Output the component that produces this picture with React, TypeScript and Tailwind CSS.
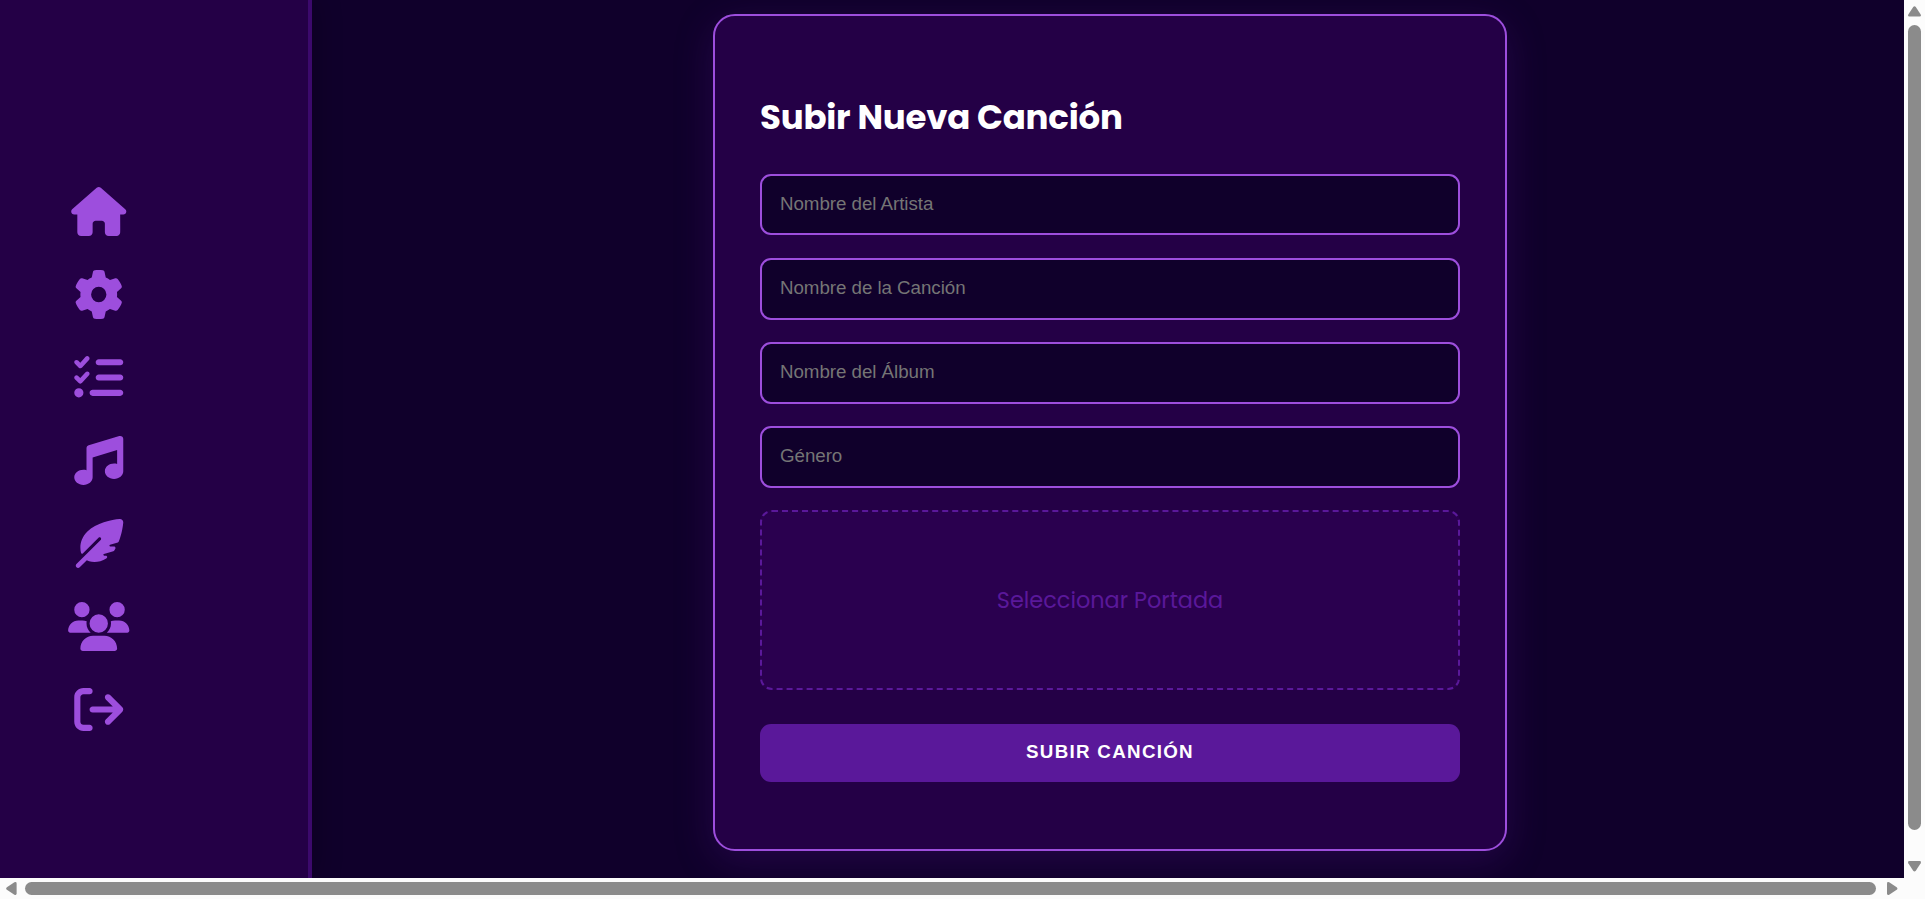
import type { IconType } from "react-icons";
import {
  FaArrowRightFromBracket,
  FaFeatherPointed,
  FaGear,
  FaHouse,
  FaListCheck,
  FaMusic,
  FaUsers,
} from "react-icons/fa6";

const navItems: { label: string; Icon: IconType }[] = [
  { label: "Inicio", Icon: FaHouse },
  { label: "Ajustes", Icon: FaGear },
  { label: "Listas", Icon: FaListCheck },
  { label: "Música", Icon: FaMusic },
  { label: "Letras", Icon: FaFeatherPointed },
  { label: "Usuarios", Icon: FaUsers },
  { label: "Salir", Icon: FaArrowRightFromBracket },
];

const fields = ["Nombre del Artista", "Nombre de la Canción", "Nombre del Álbum", "Género"];

function Sidebar() {
  return (
    <nav className="z-10 flex w-[312px] shrink-0 flex-col gap-[34px] border-r-4 border-[#3c096c] bg-[#240046] pt-[187px] pl-[68px] shadow-[5px_0_25px_rgba(0,0,0,0.2)]">
      {navItems.map(({ label, Icon }) => (
        <a key={label} aria-label={label} className="block h-[49px] w-[61.5px] text-[#9d4edd]">
          <Icon className="h-[49px] w-[61.5px]" />
        </a>
      ))}
    </nav>
  );
}

function UploadForm() {
  return (
    <form className="mt-[14px] flex h-[837px] w-[794px] flex-col rounded-[22px] border-2 border-[#9d4edd] bg-[#240046] px-[45px] pt-[75px] shadow-[0_10px_38px_rgba(90,24,154,0.25)]">
      <h2 className="mb-[30.65px] h-[52px] font-[Poppins,Inter,sans-serif] text-[34px] leading-[52px] font-bold tracking-[-0.22px] whitespace-nowrap text-white">
        Subir Nueva Canción
      </h2>
      <div className="flex flex-col gap-[22.3px]">
        {fields.map((name) => (
          <input
            key={name}
            type="text"
            placeholder={name}
            className="block h-[61.8px] w-full rounded-[11px] border-2 border-[#9d4edd] bg-[#10002b] px-[18px] pb-[1.5px] font-['Liberation_Sans',Arial,sans-serif] text-[18.75px] tracking-[-0.05px] text-white placeholder:text-[#757575]"
          />
        ))}
        <div className="flex h-[180px] items-center justify-center rounded-[12px] border-2 border-dashed border-[#5a189a] bg-[#2a004f] pt-[2px] font-[Poppins,Inter,sans-serif] text-[22.4px] text-[#5a189a]">
          Seleccionar Portada
        </div>
      </div>
      <button
        type="button"
        className="mt-[34px] h-[58px] shrink-0 rounded-[11px] bg-[#5a189a] pb-[2px] font-['Liberation_Sans',Arial,sans-serif] text-[18.75px] font-bold tracking-[1.3px] text-white"
      >
        SUBIR CANCIÓN
      </button>
    </form>
  );
}

function VerticalScrollbar() {
  return (
    <div className="flex h-full w-[21px] flex-col items-center bg-[#fcfcfc] pt-[6px]">
      <svg className="h-[11px] w-[13px]" viewBox="0 0 13 11" fill="#8b8b8b">
        <path d="M5.2 .9Q6.5-.6 7.8.9L12.7 8.4Q13.6 10.6 11.6 10.6H1.4Q-.6 10.6.3 8.4Z" />
      </svg>
      <div className="mt-[8px] h-[805px] w-[13px] rounded-full bg-[#8b8b8b]" />
      <svg className="mt-[31px] h-[11px] w-[13px]" viewBox="0 0 13 11" fill="#8b8b8b">
        <path d="M5.2 9.7Q6.5 11.2 7.8 9.7L12.7 2.2Q13.6 0 11.6 0H1.4Q-.6 0 .3 2.2Z" />
      </svg>
    </div>
  );
}

function HorizontalScrollbar() {
  return (
    <div className="flex h-[21px] w-full items-center bg-[#fcfcfc] pl-[6px]">
      <svg className="h-[13px] w-[11px]" viewBox="0 0 11 13" fill="#8b8b8b">
        <path d="M.9 5.2Q-.6 6.5.9 7.8L8.4 12.7Q10.6 13.6 10.6 11.6V1.4Q10.6-.6 8.4.3Z" />
      </svg>
      <div className="ml-[8px] h-[13px] w-[1851px] rounded-full bg-[#8b8b8b]" />
      <svg className="ml-[11px] h-[13px] w-[11px]" viewBox="0 0 11 13" fill="#8b8b8b">
        <path d="M9.7 5.2Q11.2 6.5 9.7 7.8L2.2 12.7Q0 13.6 0 11.6V1.4Q0-.6 2.2.3Z" />
      </svg>
    </div>
  );
}

export default function App() {
  return (
    <div className="flex h-[899px] w-[1925px] flex-col overflow-hidden bg-[#10002b]">
      <div className="flex h-[878px] w-full">
        <div className="flex h-full w-[1904px] overflow-hidden">
          <Sidebar />
          <main className="flex flex-1 items-start pl-[401px]">
            <UploadForm />
          </main>
        </div>
        <VerticalScrollbar />
      </div>
      <HorizontalScrollbar />
    </div>
  );
}
